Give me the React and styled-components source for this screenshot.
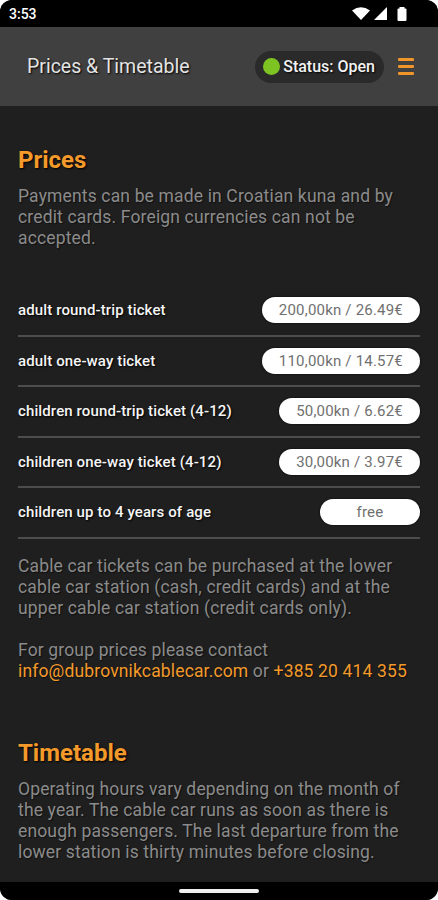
import React from 'react';
import styled, { createGlobalStyle } from 'styled-components';

const GlobalStyle = createGlobalStyle`
  body {
    margin: 0;
    background: #ffffff;
    font-family: Roboto, "Liberation Sans", sans-serif;
  }
`;

const Screen = styled.div`
  width: 438px;
  height: 900px;
  display: flex;
  flex-direction: column;
  border-radius: 12px;
  overflow: hidden;
  background: #1f1f1f;
`;

const StatusBar = styled.div`
  height: 27px;
  flex-shrink: 0;
  background: #000;
  display: flex;
  align-items: center;
  justify-content: space-between;
  padding: 0 30px 0 9px;
  color: #fff;
  font-size: 14px;
  font-weight: 500;
`;

const StatusIcons = styled.div`
  display: flex;
  align-items: center;
  gap: 4px;
`;

const Header = styled.header`
  height: 79px;
  flex-shrink: 0;
  background: #404040;
  display: flex;
  align-items: center;
  padding: 0 24px 0 27px;
`;

const Title = styled.h1`
  flex: 1;
  margin: 0;
  font-size: 19.5px;
  font-weight: 400;
  color: #e4e4e4;
  text-shadow: 1px 1px 2px #000;
`;

const StatusPill = styled.div`
  display: flex;
  align-items: center;
  gap: 3px;
  height: 32px;
  padding: 0 9px 0 8px;
  border-radius: 16px;
  background: #2a2a2a;
  color: #f2f2f2;
  font-size: 16px;
  font-weight: 500;
  text-shadow: 1px 1px 2px #000;
  margin-right: 14px;
`;

const Dot = styled.span`
  width: 17px;
  height: 17px;
  border-radius: 50%;
  background: #7dc423;
`;

const Burger = styled.div`
  width: 16px;
  display: flex;
  flex-direction: column;
  gap: 4px;
  span {
    height: 3px;
    background: #f0952a;
    border-radius: 1px;
  }
`;

const Content = styled.main`
  flex: 1;
  overflow: hidden;
  padding: 42px 18px 0;
`;

const Heading = styled.h2`
  margin: 0 0 14px;
  font-size: 24px;
  line-height: 24px;
  font-weight: 700;
  color: #f39a2b;
  text-shadow: 1px 1px 2px #000;
  margin-top: ${(p) => (p.$first ? '0' : '59px')};
`;

const Text = styled.p`
  margin: 0;
  font-size: 17.5px;
  letter-spacing: 0.15px;
  line-height: 21px;
  color: #8b8b8b;
  text-shadow: 1px 1px 1px #111;
`;

const Link = styled.span`
  color: #f39a2b;
`;

const PriceList = styled.div`
  margin: 37px 0 17px;
`;

const Row = styled.div`
  height: 48.5px;
  display: flex;
  align-items: center;
  justify-content: space-between;
  border-bottom: 2px solid #4d4d4d;
`;

const Label = styled.span`
  font-size: 15px;
  letter-spacing: 0.12px;
  font-weight: 500;
  color: #f5f5f5;
  text-shadow: 1px 1px 2px #000;
`;

const Price = styled.span`
  min-width: 66px;
  height: 26px;
  line-height: 26px;
  padding: 0 17px;
  border-radius: 13px;
  background: #fff;
  color: #707070;
  font-size: 15px;
  letter-spacing: 0.2px;
  text-align: center;
  box-shadow: 0 0 2px #000;
`;

const HomeBar = styled.div`
  height: 18px;
  flex-shrink: 0;
  background: #000;
  display: flex;
  align-items: center;
  justify-content: center;
  span {
    width: 80px;
    height: 4px;
    border-radius: 2px;
    background: #f0f0f0;
  }
`;

const prices = [
  ['adult round-trip ticket', '200,00kn / 26.49€'],
  ['adult one-way ticket', '110,00kn / 14.57€'],
  ['children round-trip ticket (4-12)', '50,00kn / 6.62€'],
  ['children one-way ticket (4-12)', '30,00kn / 3.97€'],
  ['children up to 4 years of age', 'free'],
];

const App = () => {
  return (
    <Screen>
      <GlobalStyle />
      <StatusBar>
        <span>3:53</span>
        <StatusIcons>
          <svg width="18" height="14" viewBox="0 0 18 14">
            <path d="M0 3.5 Q9 -3 18 3.5 L9 13 Z" fill="#fff" />
          </svg>
          <svg width="13" height="13" viewBox="0 0 13 13">
            <path d="M13 0 V13 H0 Z" fill="#fff" />
          </svg>
          <svg width="12" height="14" viewBox="0 0 12 14" style={{ marginLeft: 5 }}>
            <rect x="3.5" y="0" width="5" height="2" fill="#fff" />
            <rect x="1.5" y="1.5" width="9" height="12.5" rx="1" fill="#fff" />
          </svg>
        </StatusIcons>
      </StatusBar>
      <Header>
        <Title>Prices &amp; Timetable</Title>
        <StatusPill>
          <Dot />
          Status: Open
        </StatusPill>
        <Burger>
          <span />
          <span />
          <span />
        </Burger>
      </Header>
      <Content>
        <Heading $first>Prices</Heading>
        <Text>
          Payments can be made in Croatian kuna and by credit cards. Foreign
          currencies can not be accepted.
        </Text>
        <PriceList>
          {prices.map(([label, price]) => (
            <Row key={label}>
              <Label>{label}</Label>
              <Price>{price}</Price>
            </Row>
          ))}
        </PriceList>
        <Text>
          Cable car tickets can be purchased at the lower cable car station
          (cash, credit cards) and at the upper cable car station (credit cards
          only).
          <br />
          <br />
          For group prices please contact
          <br />
          <Link>info@dubrovnikcablecar.com</Link> or <Link>+385 20 414 355</Link>
        </Text>
        <Heading>Timetable</Heading>
        <Text>
          Operating hours vary depending on the month of the year. The cable car
          runs as soon as there is enough passengers. The last departure from the
          lower station is thirty minutes before closing.
        </Text>
      </Content>
      <HomeBar>
        <span />
      </HomeBar>
    </Screen>
  );
};

export default App;
